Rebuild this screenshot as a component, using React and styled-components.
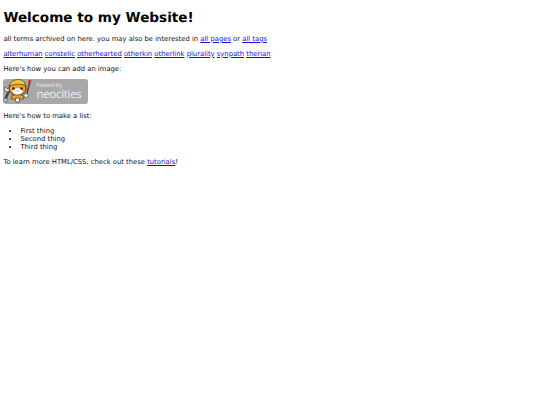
import React from "react";
import styled, { createGlobalStyle } from "styled-components";

const Global = createGlobalStyle`
  html, body { margin: 0; background: #fff; }
  body {
    padding: 0 3.4px; color: #111; font: 6.8px/8px "DejaVu Sans", Verdana, sans-serif;
    text-rendering: geometricPrecision;
  }
`;
const Heading = styled.h1`
  margin: 0; padding-top: 9.8px; font-size: 13.6px; line-height: 16px; font-weight: 700; color: #000;
`;
const Para = styled.p`margin: ${p => p.$top ?? 6.8}px 0 0;`;
const Link = styled.a`color: #1111dd; text-decoration: underline;`;
const Badge = styled.a`
  display: flex; align-items: center; width: 85px; height: 25px; margin-top: 5.6px; background: #a8a8a8;
  border-radius: 3px; overflow: hidden; text-decoration: none;
`;
const BadgeText = styled.span`
  display: flex; flex-direction: column; color: #f0f0f0; margin-left: 2px; padding-top: 2px;
`;
const Hosted = styled.span`font: 5.500px/6px "Open Sans", sans-serif;`;
const Brand = styled.span`font: 11.500px/14px "Open Sans", sans-serif; letter-spacing: -.3px;`;
const List = styled.ul`margin: 6.8px 0 0; padding: 0 0 0 17px; line-height: 8px;`;

const Mascot = () => (
  <svg width="31" height="25" viewBox="0 0 31 25" aria-hidden="true">
    <path d="M5 11l2 1-3 8-2.500-1z" fill="#444" />
    <path d="M1 9l2-1 1 2 2-1 1 2-2 2-3-1z" fill="#e8e8e8" stroke="#444" strokeWidth=".7" />
    <path d="M1 19l3 1 0 3-3-1z" fill="#e8e8e8" stroke="#444" strokeWidth=".6" />
    <ellipse cx="14.500" cy="9.500" rx="8.500" ry="6.800" fill="#ee9f35" stroke="#4f3210" />
    <path d="M6 7c1-4 6-7 10.500-6.500 3 .3 5.500 2.500 6.500 6-6-2-11-1.500-17 .5z" fill="#f4c53f" stroke="#5f4210" strokeWidth=".8" />
    <ellipse cx="14.500" cy="12.500" rx="5" ry="3.200" fill="#fff" />
    <circle cx="10.500" cy="9.500" r="1.200" fill="#222" />
    <circle cx="18.500" cy="9.500" r="1.200" fill="#222" />
    <path d="M13.500 11.500h2l-1 1z" fill="#333" />
    <path d="M26 3l1.500.5-3 12-1.500-.5z" fill="#6f3d22" />
    <path d="M26 .500l2.500 1-1 3-2.500-1z" fill="#c33" />
    <path d="M9 16h11l1 4H8z" fill="#ee9f35" stroke="#4f3210" strokeWidth=".6" />
    <circle cx="14.500" cy="21" r="2.300" fill="#fff" stroke="#333" strokeWidth=".8" />
    <circle cx="23" cy="16.500" r="2" fill="#fff" stroke="#444" strokeWidth=".7" />
  </svg>
);

const tags = ["alterhuman", "constelic", "otherhearted", "otherkin", "otherlink", "plurality", "synpath", "therian"];

export default function App() {
  return (
    <>
      <Global />
      <Heading>Welcome to my Website!</Heading>
      <Para $top={9.1}>
        all terms archived on here. you may also be interested in <Link href="#">all pages</Link> or <Link href="#">all tags</Link>
      </Para>
      <Para>
        {tags.map((t, i) => (
          <React.Fragment key={t}>
            {i > 0 && " "}
            <Link href="#">{t}</Link>
          </React.Fragment>
        ))}
      </Para>
      <Para $top={7.4}>Here's how you can add an image:</Para>
      <Badge href="#">
        <Mascot />
        <BadgeText>
          <Hosted>hosted by,</Hosted>
          <Brand>neocities</Brand>
        </BadgeText>
      </Badge>
      <Para $top={8.6}>Here's how to make a list:</Para>
      <List>
        <li>First thing</li>
        <li>Second thing</li>
        <li>Third thing</li>
      </List>
      <Para>To learn more HTML/CSS, check out these <Link href="#">tutorials</Link>!</Para>
    </>
  );
}
